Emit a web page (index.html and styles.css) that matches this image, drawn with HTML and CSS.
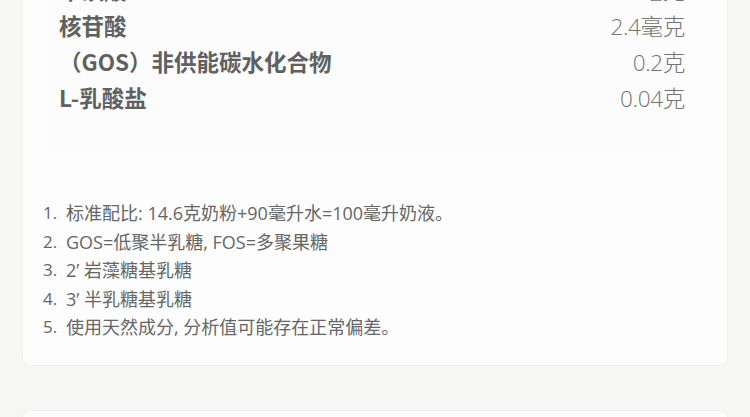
FILE: index.html
```html
<!DOCTYPE html>
<html>
<head>
<meta charset="UTF-8"/>
<title>营养成分</title>
<link rel="stylesheet" href="styles.css">
</head>
<body>
	<div class="card card-top">
		<div class="nutri">
			<div class="row"><span class="name">牛磺酸</span><span class="val">25毫克</span></div>
			<div class="row"><span class="name">核苷酸</span><span class="val">2.4毫克</span></div>
			<div class="row"><span class="name">（GOS）非供能碳水化合物</span><span class="val">0.2克</span></div>
			<div class="row"><span class="name">L-乳酸盐</span><span class="val">0.04克</span></div>
		</div>
		<ol class="notes">
			<li><span class="no">1.</span>标准配比: 14.6克奶粉+90毫升水=100毫升奶液。</li>
			<li><span class="no">2.</span>GOS=低聚半乳糖, FOS=多聚果糖</li>
			<li><span class="no">3.</span>2’ 岩藻糖基乳糖</li>
			<li><span class="no">4.</span>3’ 半乳糖基乳糖</li>
			<li><span class="no">5.</span>使用天然成分, 分析值可能存在正常偏差。</li>
		</ol>
	</div>
	<div class="card card-next"></div>
</body>
</html>
```

FILE: styles.css
```css
body {
	margin: 0;
	background: #f6f6f5;
	font-family: "Noto Sans CJK SC", "Noto Sans", sans-serif;
	color: #555;
}
.card {
	margin: 0 22px;
	background: #fdfdfd;
	border: 1px solid #f1f1f0;
	border-radius: 8px;
}
.card-top {
	margin-top: -54px;
	padding: 10px 42px 23px 20px;
}
.card-next {
	margin-top: 44px;
	height: 60px;
}
.nutri {
	padding: 14px 0 0 16px;
	background: #fcfcfc;
	height: 187px;
}
.row {
	display: flex;
	justify-content: space-between;
	align-items: center;
	height: 36px;
}
.name {
	font-size: 22.5px;
	font-weight: 700;
	color: #606060;
}
.val {
	font-family: "Open Sans", "Noto Sans CJK SC", sans-serif;
	font-size: 22.5px;
	font-weight: 300;
	color: #737373;
	letter-spacing: -0.3px;
}
.notes {
	list-style: none;
	margin: 41px 0 0;
	padding: 0;
}
.notes li {
	display: flex;
	font-family: "Open Sans", "Noto Sans CJK SC", sans-serif;
	font-size: 18px;
	line-height: 28.5px;
	color: #666;
}
.notes .no {
	width: 23px;
	flex: none;
	font-size: 17px;
}
```
